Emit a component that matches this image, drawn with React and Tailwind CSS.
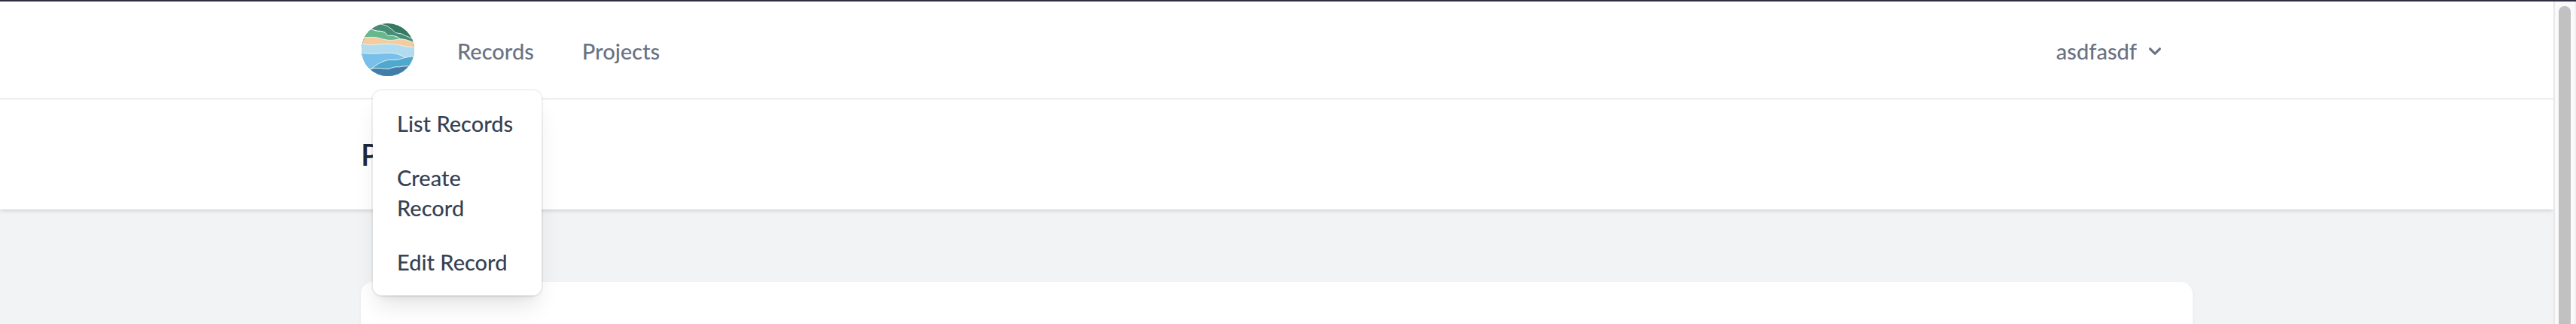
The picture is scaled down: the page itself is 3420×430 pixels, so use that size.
function Logo() {
  return (
    <svg viewBox="-1 -1 72 72" className="block size-[72px]" aria-hidden="true">
      <defs>
        <clipPath id="disc">
          <circle cx="35" cy="35" r="35" />
        </clipPath>
      </defs>
      <g clipPath="url(#disc)" stroke="#eef5f2" strokeWidth="0.9">
        <rect x="-2" y="-2" width="74" height="74" fill="#357960" />
        <path d="M-2 -2 L22 1 Q33 1.5 38 6.3 Q42 9 45 12.5 Q54 13 61 17.5 Q66 19 74 25 V40 H-2 Z" fill="#458d77" />
        <path d="M-2 8 L13 8 Q20 11 27 10.5 Q31.5 11 35.3 16.5 Q44 15 51 20.5 Q56 21 72 27 V45 H-2 Z" fill="#458d77" />
        <path d="M-2 8 L13 8 Q20 11 27 10.5 Q31.5 11 35.3 16.5 Q44 15 51 20.5 L53 24 H-2 Z" fill="#68b88f" />
        <path d="M-2 19 C8 18.5 14 18 20 18.8 C28 20.5 34 23.5 44 22 C50 21 56 19 70 26 V45 H-2 Z" fill="#f5cba0" />
        <path d="M-2 27 C6 27.5 10 29 18 28.3 C28 27 38 26.5 48 28.3 C56 30 62 32 72 31.3 V50 H-2 Z" fill="#b1dbee" />
        <path d="M-2 39 C8 40 14 40.5 24 39.8 C34 39 44 38.5 51 42 Q55 43.5 59 46 V72 H-2 Z" fill="#78c0e9" />
        <path d="M12 61 C20 55 25 51 34.7 48.7 C40 48 44 49 49 48 C56 46 62 44 72 43.7 V72 H12 Z" fill="#4fa9cf" />
        <path d="M-2 61 H11 Q17 58.5 23 59.5 Q31 60.5 36 60.5 Q41 58.5 45 57.8 Q50 58.3 55 57 L72 56.3 V72 H-2 Z" fill="#427cab" />
      </g>
    </svg>
  );
}

function MenuItem({ children }) {
  return (
    <a href="#" className="block px-8 py-4 text-[29px] leading-10 text-gray-700">
      {children}
    </a>
  );
}

export default function App() {
  return (
    <div className="flex h-screen flex-col overflow-hidden border-t-2 border-[#2f2f42] font-['Lato',sans-serif] font-medium">
      <div className="flex min-h-0 flex-1">
        <div className="min-w-0 flex-1 overflow-hidden bg-[#f2f3f5]">
          <nav className="border-b-2 border-[#f0f0f1] bg-white">
            <div className="mx-auto flex h-32 max-w-[2560px] items-center justify-between px-16">
              <div className="flex items-center">
                <a href="#" aria-label="Home">
                  <Logo />
                </a>
                <div className="relative ml-14 flex items-center gap-16 pt-1 text-[29px] leading-10 text-gray-500">
                  <button type="button" aria-expanded="true">
                    Records
                  </button>
                  <a href="#">Projects</a>
                  <div className="absolute -left-28 top-full z-10 mt-8 w-56 rounded-xl bg-white py-2 shadow-[0_0_0_2px_rgba(0,0,0,0.05),0_20px_30px_-6px_rgba(0,0,0,0.1),0_8px_12px_-8px_rgba(0,0,0,0.1)]">
                    <MenuItem>List Records</MenuItem>
                    <MenuItem>Create Record</MenuItem>
                    <MenuItem>Edit Record</MenuItem>
                  </div>
                </div>
              </div>
              <button
                type="button"
                className="flex items-center gap-2 pt-1 pr-[34px] text-[29px] leading-10 text-gray-500"
              >
                asdfasdf
                <svg viewBox="0 0 20 20" className="size-8" fill="currentColor" aria-hidden="true">
                  <path
                    fillRule="evenodd"
                    clipRule="evenodd"
                    d="M5.293 7.293a1 1 0 011.414 0L10 10.586l3.293-3.293a1 1 0 111.414 1.414l-4 4a1 1 0 01-1.414 0l-4-4a1 1 0 010-1.414z"
                  />
                </svg>
              </button>
            </div>
          </nav>
          <header className="bg-white shadow-[0_2px_6px_rgba(0,0,0,0.1),0_2px_4px_-2px_rgba(0,0,0,0.1)]">
            <div className="mx-auto max-w-[2560px] px-16 py-12">
              <h2 className="text-[40px] leading-[50px] font-semibold text-gray-800">P</h2>
            </div>
          </header>
          <main className="mx-auto max-w-[2560px] px-16 py-24">
            <div className="h-96 rounded-2xl bg-white shadow-[0_2px_4px_rgba(0,0,0,0.05)]" />
          </main>
        </div>
        <div className="flex w-[30px] flex-none justify-center border-r-2 border-l-2 border-r-[#f0f0f0] border-l-[#e8e8e8] bg-[#fafafa] pt-1.5">
          <div className="h-full w-4 rounded-t-full bg-[#c1c1c1]" />
        </div>
      </div>
    </div>
  );
}
